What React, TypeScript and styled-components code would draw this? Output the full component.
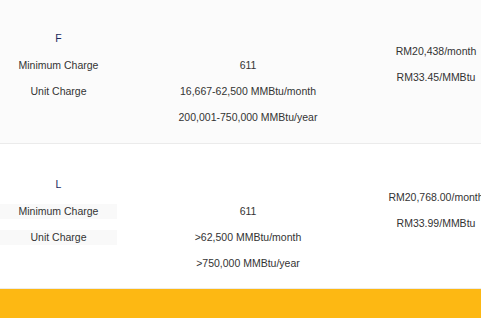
import React from 'react';
import styled, { createGlobalStyle } from 'styled-components';

type Tariff = {
  code: string;
  shaded: boolean;
  volumes: string[];
  rates: string[];
};

const tariffs: Tariff[] = [
  {
    code: 'F',
    shaded: true,
    volumes: ['611', '16,667-62,500 MMBtu/month', '200,001-750,000 MMBtu/year'],
    rates: ['RM20,438/month', 'RM33.45/MMBtu'],
  },
  {
    code: 'L',
    shaded: false,
    volumes: ['611', '>62,500 MMBtu/month', '>750,000 MMBtu/year'],
    rates: ['RM20,768.00/month', 'RM33.99/MMBtu'],
  },
];

const GlobalStyle = createGlobalStyle`
  body {
    margin: 0;
    overflow: hidden;
    font-family: "Liberation Sans", Arial, sans-serif;
    color: #333;
    background: #fff;
  }
`;

const App: React.FC = () => (
  <>
    <GlobalStyle />
    <Page>
      {tariffs.map((t, i) => {
        // first row sits a pixel higher in the scrolled view
        const shift = i === 0 ? -1 : 0;
        return (
          <TariffRow key={t.code} $shaded={t.shaded}>
            <Column $top={33 + shift}>
              <Code>{t.code}</Code>
              <Label $shaded={t.shaded}>Minimum Charge</Label>
              <Label $shaded={t.shaded}>Unit Charge</Label>
            </Column>
            <Column $top={60 + shift}>
              {t.volumes.map((v) => (
                <Cell key={v}>{v}</Cell>
              ))}
            </Column>
            <Column $top={46 + shift}>
              {t.rates.map((r) => (
                <Cell key={r}>{r}</Cell>
              ))}
            </Column>
          </TariffRow>
        );
      })}
      <Footer />
    </Page>
  </>
);

export default App;

const Page = styled.div`
  width: 493px;
  margin-top: -1px;
`;

const TariffRow = styled.div<{ $shaded: boolean }>`
  display: grid;
  grid-template-columns: 117px 262px 114px;
  height: 144px;
  border-bottom: 1px solid #ebebeb;
  background: ${(p) => (p.$shaded ? '#fbfbfb' : '#fff')};
`;

const Column = styled.div<{ $top: number }>`
  display: flex;
  flex-direction: column;
  align-items: center;
  gap: 11px;
  padding-top: ${(p) => p.$top}px;
  white-space: nowrap;
`;

const Cell = styled.div`
  font-size: 10.5px;
  line-height: 15px;
`;

const Code = styled(Cell)`
  color: #1b2a5e;
  margin-bottom: 1px;
`;

const Label = styled(Cell)<{ $shaded: boolean }>`
  align-self: stretch;
  text-align: center;
  background: ${(p) => (p.$shaded ? 'transparent' : '#f9f9f9')};
`;

const Footer = styled.div`
  height: 60px;
  background: #fdb813;
`;
